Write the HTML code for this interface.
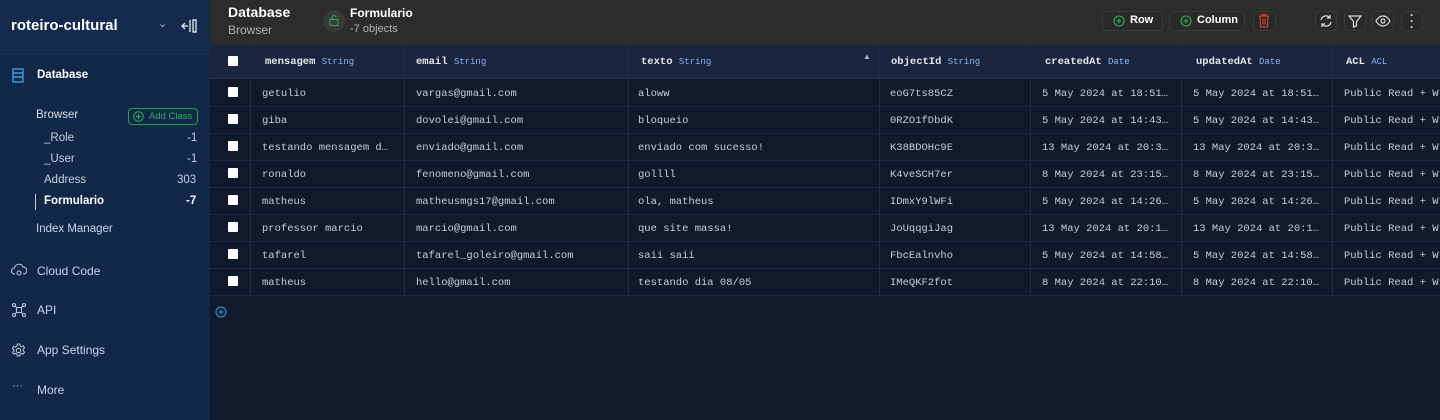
<!DOCTYPE html>
<html><head><style>
*{box-sizing:border-box;margin:0;padding:0}
body{width:1440px;height:420px;overflow:hidden;background:#111a2c;font-family:"Liberation Sans",sans-serif;position:relative}
.sb{position:absolute;left:0;top:0;width:210px;height:420px;background:#112848}
.sbtop{position:absolute;left:0;top:0;width:210px;height:55px;background:#142b4e;border-bottom:1px solid #1a3358}
.t{position:absolute;white-space:nowrap}
.hdr{position:absolute;left:210px;top:0;width:1230px;height:45px;background:#2c2c2c}
.btn{position:absolute;top:11px;height:20px;border:1px solid #3a3a3a;border-radius:4px;background:#2a2a2a}
.th{position:absolute;top:45px;left:210px;width:1230px;height:34px;background:#1b2540;border-bottom:1px solid #26304a}
.col{position:absolute;top:45px;width:1px;height:251px;background:#212b40}
.row{position:absolute;left:210px;width:1230px;height:27px;border-bottom:1px solid #1f2940}
.cell{position:absolute;font-family:"Liberation Mono",monospace;font-size:10.5px;color:#c9ccd4;white-space:nowrap;top:8px}
.cb{position:absolute;left:18px;top:7px;width:10px;height:10px;background:#fff;border-radius:1px}
.hn{position:absolute;top:11px;font-family:"Liberation Mono",monospace;font-size:10.5px;font-weight:bold;color:#e5e7ee;white-space:nowrap}
.hn span{font-weight:normal;font-size:9px;color:#8fb4e6}
.si{font-size:11.5px}
</style></head><body>
<div class="sb">
<div class="sbtop"></div>
<div class="t" style="left:11px;top:17px;color:#fff;font-size:15px;font-weight:bold">roteiro-cultural</div>
<div class="t" style="left:158px;top:17px;color:#aab4c6;font-size:11px">&#8964;</div>
<svg class="t" style="left:181px;top:18px" width="16" height="16" viewBox="0 0 16 16" fill="none" stroke="#d8dde6" stroke-width="1.4"><path d="M1 8h6M4 5l-3 3 3 3M9 2v12M12 2h3v12h-3z"/></svg>
<svg class="t" style="left:12px;top:68px" width="12" height="15" viewBox="0 0 12 15" fill="none" stroke="#3b9ee0" stroke-width="1.4"><rect x="1" y="1" width="10" height="13"/><path d="M1 5h10M1 9h10"/></svg>
<div class="t" style="left:37px;top:69px;color:#fff;font-size:11.5px;font-weight:bold">Database</div>
<div class="t si" style="left:36px;top:109px;color:#d8dee8">Browser</div>
<div class="t" style="left:128px;top:108px;width:70px;height:17px;border:1px solid #21a34d;border-radius:4px;color:#27b255;font-size:9.5px;padding:2px 0 0 20px">Add Class</div>
<svg class="t" style="left:133px;top:111px" width="11" height="11" viewBox="0 0 11 11" fill="none" stroke="#27b255"><circle cx="5.5" cy="5.5" r="4.8"/><path d="M5.5 3v5M3 5.5h5"/></svg>
<div class="t si" style="left:44px;top:132px;color:#c7d0de">_Role</div><div class="t si" style="left:187px;top:132px;color:#c7d0de">-1</div>
<div class="t si" style="left:44px;top:153px;color:#c7d0de">_User</div><div class="t si" style="left:187px;top:153px;color:#c7d0de">-1</div>
<div class="t si" style="left:44px;top:174px;color:#c7d0de">Address</div><div class="t si" style="left:177px;top:174px;color:#c7d0de">303</div>
<div class="t" style="left:35px;top:194px;width:1px;height:16px;background:#c7d0de"></div>
<div class="t si" style="left:44px;top:195px;color:#fff;font-weight:bold">Formulario</div><div class="t si" style="left:186px;top:195px;color:#fff;font-weight:bold">-7</div>
<div class="t si" style="left:36px;top:223px;color:#c7d4e8">Index Manager</div>
<svg class="t" style="left:11px;top:263px" width="16" height="14" viewBox="0 0 16 14" fill="none" stroke="#b7c2d4" stroke-width="1.1"><path d="M4 11H3.5a3 3 0 0 1 0-6 4.5 4.5 0 0 1 8.6-1A3.5 3.5 0 0 1 12.5 11H12"/><circle cx="8" cy="10" r="2"/></svg>
<div class="t" style="left:37px;top:264px;color:#c7d4e8;font-size:12px">Cloud Code</div>
<svg class="t" style="left:12px;top:303px" width="14" height="14" viewBox="0 0 14 14" fill="none" stroke="#b7c2d4" stroke-width="1.1"><circle cx="2" cy="2" r="1.5"/><circle cx="12" cy="2" r="1.5"/><circle cx="2" cy="12" r="1.5"/><circle cx="12" cy="12" r="1.5"/><rect x="4.5" y="4.5" width="5" height="5"/><path d="M3 3l1.5 1.5M11 3L9.5 4.5M3 11l1.5-1.5M11 11L9.5 9.5"/></svg>
<div class="t" style="left:37px;top:303px;color:#c7d4e8;font-size:12px">API</div>
<svg class="t" style="left:11px;top:343px" width="15" height="15" viewBox="0 0 15 15" fill="none" stroke="#b7c2d4" stroke-width="1.1"><circle cx="7.5" cy="7.5" r="2.2"/><path d="M6.3 1h2.4l.4 1.8 1.5.8 1.7-.7 1.2 2-1.3 1.3v1.6l1.3 1.3-1.2 2-1.7-.7-1.5.8-.4 1.8H6.3l-.4-1.8-1.5-.8-1.7.7-1.2-2L2.8 8.3V6.7L1.5 5.4l1.2-2 1.7.7 1.5-.8z"/></svg>
<div class="t" style="left:37px;top:343px;color:#c7d4e8;font-size:12px">App Settings</div>
<div class="t" style="left:12px;top:380px;color:#b7c2d4;font-size:11px">···</div>
<div class="t" style="left:37px;top:383px;color:#c7d4e8;font-size:12px">More</div>
</div>

<div class="hdr">
<div class="t" style="left:18px;top:4px;color:#fff;font-size:14px;font-weight:bold">Database</div>
<div class="t" style="left:18px;top:23px;color:#b0b3b8;font-size:12px">Browser</div>
<div class="t" style="left:113px;top:10px;width:22px;height:22px;border-radius:11px;background:#3a3a3a"></div>
<svg class="t" style="left:119px;top:14px" width="10" height="12" viewBox="0 0 10 12" fill="none" stroke="#2fa552" stroke-width="1.1"><rect x="1" y="5.5" width="8" height="6"/><path d="M3 5.5V3.5a2 2 0 0 1 4 0"/></svg>
<div class="t" style="left:140px;top:6px;color:#fff;font-size:12px;font-weight:bold">Formulario</div>
<div class="t" style="left:140px;top:23px;color:#b0b3b8;font-size:11px">-7 objects</div>
<div class="btn" style="left:892px;width:61px"></div>
<svg class="t" style="left:903px;top:15px" width="12" height="12" viewBox="0 0 12 12" fill="none" stroke="#2fb057" stroke-width="1.1"><circle cx="6" cy="6" r="5"/><path d="M6 3.5v5M3.5 6h5"/></svg>
<div class="t" style="left:920px;top:14px;color:#fff;font-size:11px;font-weight:bold">Row</div>
<div class="btn" style="left:959px;width:76px"></div>
<svg class="t" style="left:970px;top:15px" width="12" height="12" viewBox="0 0 12 12" fill="none" stroke="#2fb057" stroke-width="1.1"><circle cx="6" cy="6" r="5"/><path d="M6 3.5v5M3.5 6h5"/></svg>
<div class="t" style="left:987px;top:14px;color:#fff;font-size:11px;font-weight:bold">Column</div>
<div class="btn" style="left:1043px;width:23px"></div>
<svg class="t" style="left:1048px;top:13px" width="12" height="15" viewBox="0 0 12 15" fill="none" stroke="#c8412e" stroke-width="1.2"><path d="M1 3h10M4 3V1.5h4V3M2 3l.7 11h6.6L10 3M5 5.5v6M7 5.5v6"/></svg>
<div class="btn" style="left:1105px;width:22px"></div>
<svg class="t" style="left:1109px;top:14px" width="14" height="14" viewBox="0 0 14 14" fill="none" stroke="#ddd" stroke-width="1.2"><path d="M2 6a5 5 0 0 1 9-2M12 8a5 5 0 0 1-9 2M11 1v3H8M3 13v-3h3"/></svg>
<div class="btn" style="left:1134px;width:22px"></div>
<svg class="t" style="left:1138px;top:14px" width="14" height="14" viewBox="0 0 14 14" fill="none" stroke="#ddd" stroke-width="1.2"><path d="M1 2h12L8.5 7.5V12L5.5 13V7.5z"/></svg>
<div class="btn" style="left:1162px;width:22px"></div>
<svg class="t" style="left:1165px;top:15px" width="16" height="12" viewBox="0 0 16 12" fill="none" stroke="#ddd" stroke-width="1.2"><path d="M1 6s2.5-5 7-5 7 5 7 5-2.5 5-7 5-7-5-7-5z"/><circle cx="8" cy="6" r="2"/></svg>
<div class="btn" style="left:1191px;width:22px"></div>
<div class="t" style="left:1200px;top:12px;color:#ddd;font-size:12px;font-weight:bold;line-height:6px">·<br>·<br>·</div>
</div>

<div class="th">
<div class="cb" style="top:11px"></div>
<div class="hn" style="left:55px">mensagem <span>String</span></div>
<div class="hn" style="left:206px">email <span>String</span></div>
<div class="hn" style="left:431px">texto <span>String</span></div>
<div class="t" style="left:653px;top:7px;color:#bbb;font-size:8px">▲</div>
<div class="hn" style="left:681px">objectId <span>String</span></div>
<div class="hn" style="left:835px">createdAt <span>Date</span></div>
<div class="hn" style="left:986px">updatedAt <span>Date</span></div>
<div class="hn" style="left:1136px">ACL <span>ACL</span></div>
</div>
<div class="col" style="left:250px"></div><div class="col" style="left:404px"></div><div class="col" style="left:628px"></div><div class="col" style="left:879px"></div><div class="col" style="left:1030px"></div><div class="col" style="left:1181px"></div><div class="col" style="left:1332px"></div>

<div class="row" style="top:80px"><div class="cb"></div><div class="cell" style="left:52px">getulio</div><div class="cell" style="left:206px">vargas@gmail.com</div><div class="cell" style="left:428px">aloww</div><div class="cell" style="left:680px">eoG7ts85CZ</div><div class="cell" style="left:832px">5 May 2024 at 18:51…</div><div class="cell" style="left:983px">5 May 2024 at 18:51…</div><div class="cell" style="left:1134px">Public Read + Wr</div></div>
<div class="row" style="top:107px"><div class="cb"></div><div class="cell" style="left:52px">giba</div><div class="cell" style="left:206px">dovolei@gmail.com</div><div class="cell" style="left:428px">bloqueio</div><div class="cell" style="left:680px">0RZO1fDbdK</div><div class="cell" style="left:832px">5 May 2024 at 14:43…</div><div class="cell" style="left:983px">5 May 2024 at 14:43…</div><div class="cell" style="left:1134px">Public Read + Wr</div></div>
<div class="row" style="top:134px"><div class="cb"></div><div class="cell" style="left:52px">testando mensagem d…</div><div class="cell" style="left:206px">enviado@gmail.com</div><div class="cell" style="left:428px">enviado com sucesso!</div><div class="cell" style="left:680px">K38BDOHc9E</div><div class="cell" style="left:832px">13 May 2024 at 20:3…</div><div class="cell" style="left:983px">13 May 2024 at 20:3…</div><div class="cell" style="left:1134px">Public Read + Wr</div></div>
<div class="row" style="top:161px"><div class="cb"></div><div class="cell" style="left:52px">ronaldo</div><div class="cell" style="left:206px">fenomeno@gmail.com</div><div class="cell" style="left:428px">gollll</div><div class="cell" style="left:680px">K4veSCH7er</div><div class="cell" style="left:832px">8 May 2024 at 23:15…</div><div class="cell" style="left:983px">8 May 2024 at 23:15…</div><div class="cell" style="left:1134px">Public Read + Wr</div></div>
<div class="row" style="top:188px"><div class="cb"></div><div class="cell" style="left:52px">matheus</div><div class="cell" style="left:206px">matheusmgs17@gmail.com</div><div class="cell" style="left:428px">ola, matheus</div><div class="cell" style="left:680px">IDmxY9lWFi</div><div class="cell" style="left:832px">5 May 2024 at 14:26…</div><div class="cell" style="left:983px">5 May 2024 at 14:26…</div><div class="cell" style="left:1134px">Public Read + Wr</div></div>
<div class="row" style="top:215px"><div class="cb"></div><div class="cell" style="left:52px">professor marcio</div><div class="cell" style="left:206px">marcio@gmail.com</div><div class="cell" style="left:428px">que site massa!</div><div class="cell" style="left:680px">JoUqqgiJag</div><div class="cell" style="left:832px">13 May 2024 at 20:1…</div><div class="cell" style="left:983px">13 May 2024 at 20:1…</div><div class="cell" style="left:1134px">Public Read + Wr</div></div>
<div class="row" style="top:242px"><div class="cb"></div><div class="cell" style="left:52px">tafarel</div><div class="cell" style="left:206px">tafarel_goleiro@gmail.com</div><div class="cell" style="left:428px">saii saii</div><div class="cell" style="left:680px">FbcEalnvho</div><div class="cell" style="left:832px">5 May 2024 at 14:58…</div><div class="cell" style="left:983px">5 May 2024 at 14:58…</div><div class="cell" style="left:1134px">Public Read + Wr</div></div>
<div class="row" style="top:269px"><div class="cb"></div><div class="cell" style="left:52px">matheus</div><div class="cell" style="left:206px">hello@gmail.com</div><div class="cell" style="left:428px">testando dia 08/05</div><div class="cell" style="left:680px">IMeQKF2fot</div><div class="cell" style="left:832px">8 May 2024 at 22:10…</div><div class="cell" style="left:983px">8 May 2024 at 22:10…</div><div class="cell" style="left:1134px">Public Read + Wr</div></div>
<svg class="t" style="left:215px;top:306px" width="12" height="12" viewBox="0 0 12 12" fill="none" stroke="#2f8fd8" stroke-width="1.2"><circle cx="6" cy="6" r="5"/><path d="M6 3.5v5M3.5 6h5"/></svg>
</body></html>
